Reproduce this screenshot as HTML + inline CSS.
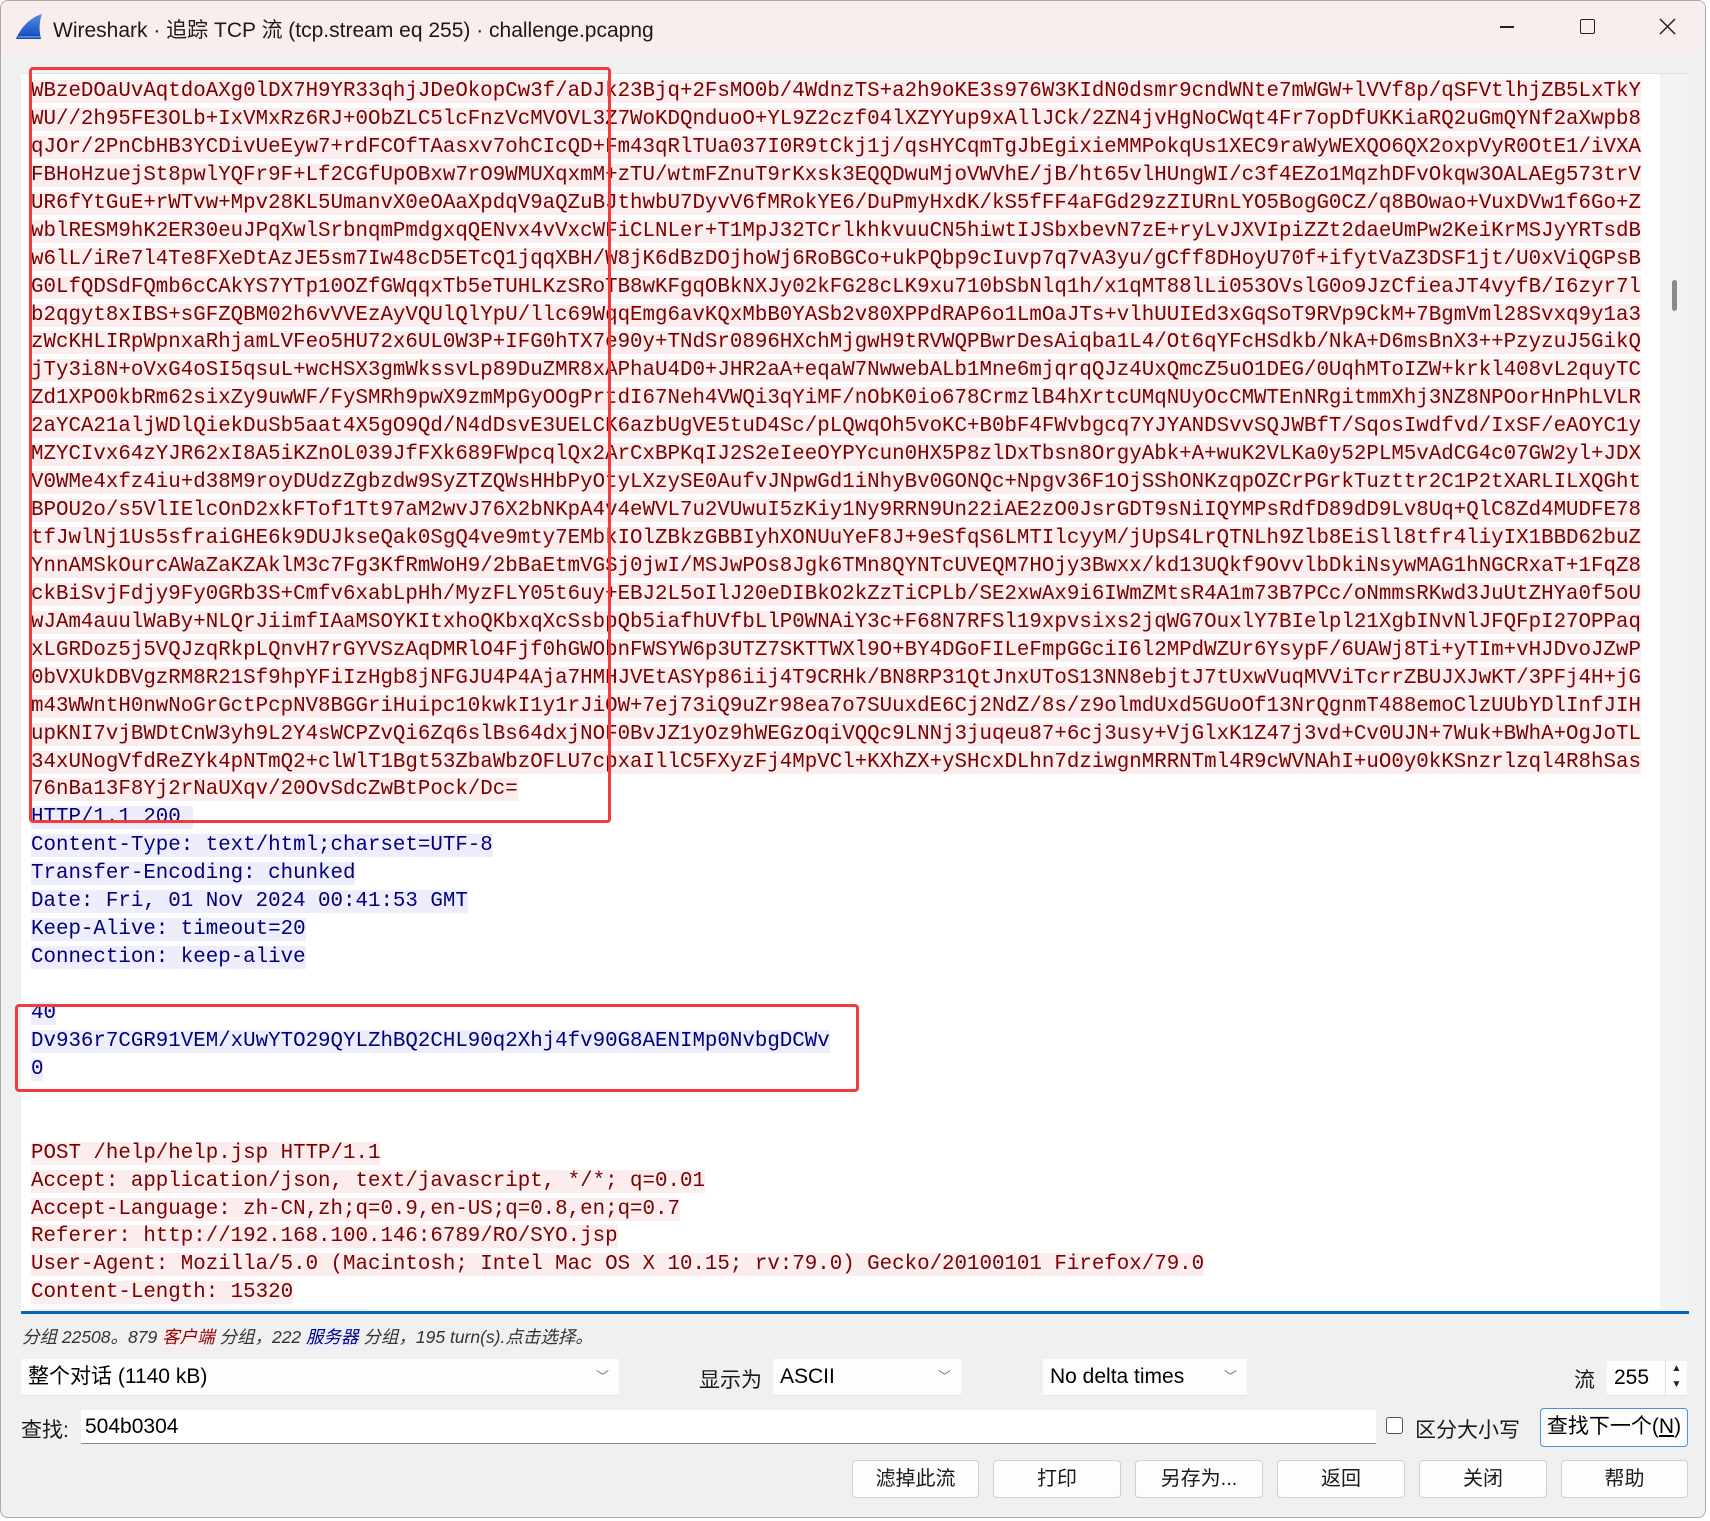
<!DOCTYPE html>
<html><head><meta charset="utf-8"><style>
*{margin:0;padding:0;box-sizing:border-box}
body{width:1710px;height:1521px;background:#fff;position:relative;overflow:hidden;font-family:"Liberation Sans","Noto Sans CJK SC",sans-serif;}
#win{position:absolute;left:0;top:0;width:1706px;height:1518px;background:#f0f0f0;border:1px solid #a9a9a9;border-radius:8px;overflow:hidden}
#title{position:absolute;left:0;top:0;right:0;height:52px;background:#f9eeee}
#title .t{position:absolute;left:52px;top:13px;font-size:21px;color:#1a1a1a;white-space:nowrap}
#ta{position:absolute;left:20px;top:72px;width:1668px;height:1240px;background:#fff;overflow:hidden;border-top:1px solid #e3e3e3}
#lines{position:absolute;left:10px;top:4px;font-family:"Liberation Mono",monospace;font-size:20.8px;line-height:27.95px}
#lines div{height:27.95px;white-space:pre}
.c span{background:#fbeded;color:#7a0000}
.s span{background:#ededfb;color:#00007f}
#sb{position:absolute;left:1639px;top:0;width:29px;height:1240px;background:#f3f3f3}
#thumb{position:absolute;left:12px;top:206px;width:5px;height:31px;background:#8a8a8a;border-radius:3px}
#blue{position:absolute;left:20px;top:1310px;width:1668px;height:3px;background:#0067c0}
.box{position:absolute;border:3.5px solid #f23b3b;border-radius:4px}
.lbl{position:absolute;font-size:20px;color:#1a1a1a;white-space:nowrap}
.cb{position:absolute;background:#fdfdfd;border-bottom:1px solid #e5e5e5;font-size:21px;color:#000;padding-left:7px;line-height:36px}
.cb i{position:absolute;right:10px;top:0;font-style:normal;font-size:13px;color:#777}
.btn{position:absolute;top:1459px;height:38px;background:#fdfdfd;border:1px solid #d0d0d0;border-radius:4px;font-size:20px;text-align:center;line-height:36px;color:#1a1a1a}
</style></head><body><div id="win">
<div id="title">
<svg style="position:absolute;left:14px;top:12px" width="28" height="28" viewBox="0 0 28 28"><defs><linearGradient id="g" x1="0" y1="0" x2="0" y2="1"><stop offset="0" stop-color="#4f8fe6"/><stop offset="1" stop-color="#1346b8"/></linearGradient></defs><path d="M1 26 C6 14 16 4 27 1 C24 9 24 18 26 26 Z" fill="url(#g)"/><path d="M3 24 L25 24" stroke="#8fb6ee" stroke-width="1"/></svg>
<div class="t">Wireshark · 追踪 TCP 流 (tcp.stream eq 255) · challenge.pcapng</div>
<div style="position:absolute;left:1499px;top:25px;width:14px;height:1.5px;background:#222"></div>
<div style="position:absolute;left:1579px;top:18px;width:15px;height:15px;border:1.5px solid #222;border-radius:2px"></div>
<svg style="position:absolute;left:1658px;top:17px" width="17" height="17"><path d="M1 1L16 16M16 1L1 16" stroke="#222" stroke-width="1.5"/></svg>
</div>
<div id="ta"><div id="lines"><div class="c"><span>WBzeDOaUvAqtdoAXg0lDX7H9YR33qhjJDeOkopCw3f/aDJk23Bjq+2FsMO0b/4WdnzTS+a2h9oKE3s976W3KIdN0dsmr9cndWNte7mWGW+lVVf8p/qSFVtlhjZB5LxTkY</span></div><div class="c"><span>WU//2h95FE3OLb+IxVMxRz6RJ+0ObZLC5lcFnzVcMVOVL3Z7WoKDQnduoO+YL9Z2czf04lXZYYup9xAllJCk/2ZN4jvHgNoCWqt4Fr7opDfUKKiaRQ2uGmQYNf2aXwpb8</span></div><div class="c"><span>qJOr/2PnCbHB3YCDivUeEyw7+rdFCOfTAasxv7ohCIcQD+Fm43qRlTUa037I0R9tCkj1j/qsHYCqmTgJbEgixieMMPokqUs1XEC9raWyWEXQO6QX2oxpVyR0OtE1/iVXA</span></div><div class="c"><span>FBHoHzuejSt8pwlYQFr9F+Lf2CGfUpOBxw7rO9WMUXqxmM+zTU/wtmFZnuT9rKxsk3EQQDwuMjoVWVhE/jB/ht65vlHUngWI/c3f4EZo1MqzhDFvOkqw3OALAEg573trV</span></div><div class="c"><span>UR6fYtGuE+rWTvw+Mpv28KL5UmanvX0eOAaXpdqV9aQZuBJthwbU7DyvV6fMRokYE6/DuPmyHxdK/kS5fFF4aFGd29zZIURnLYO5BogG0CZ/q8BOwao+VuxDVw1f6Go+Z</span></div><div class="c"><span>wblRESM9hK2ER30euJPqXwlSrbnqmPmdgxqQENvx4vVxcWFiCLNLer+T1MpJ32TCrlkhkvuuCN5hiwtIJSbxbevN7zE+ryLvJXVIpiZZt2daeUmPw2KeiKrMSJyYRTsdB</span></div><div class="c"><span>w6lL/iRe7l4Te8FXeDtAzJE5sm7Iw48cD5ETcQ1jqqXBH/W8jK6dBzDOjhoWj6RoBGCo+ukPQbp9cIuvp7q7vA3yu/gCff8DHoyU70f+ifytVaZ3DSF1jt/U0xViQGPsB</span></div><div class="c"><span>G0LfQDSdFQmb6cCAkYS7YTp10OZfGWqqxTb5eTUHLKzSRoTB8wKFgqOBkNXJy02kFG28cLK9xu710bSbNlq1h/x1qMT88lLi053OVslG0o9JzCfieaJT4vyfB/I6zyr7l</span></div><div class="c"><span>b2qgyt8xIBS+sGFZQBM02h6vVVEzAyVQUlQlYpU/llc69WqqEmg6avKQxMbB0YASb2v80XPPdRAP6o1LmOaJTs+vlhUUIEd3xGqSoT9RVp9CkM+7BgmVml28Svxq9y1a3</span></div><div class="c"><span>zWcKHLIRpWpnxaRhjamLVFeo5HU72x6UL0W3P+IFG0hTX7e90y+TNdSr0896HXchMjgwH9tRVWQPBwrDesAiqba1L4/Ot6qYFcHSdkb/NkA+D6msBnX3++PzyzuJ5GikQ</span></div><div class="c"><span>jTy3i8N+oVxG4oSI5qsuL+wcHSX3gmWkssvLp89DuZMR8xAPhaU4D0+JHR2aA+eqaW7NwwebALb1Mne6mjqrqQJz4UxQmcZ5uO1DEG/0UqhMToIZW+krkl408vL2quyTC</span></div><div class="c"><span>Zd1XPO0kbRm62sixZy9uwWF/FySMRh9pwX9zmMpGyOOgPrtdI67Neh4VWQi3qYiMF/nObK0io678CrmzlB4hXrtcUMqNUyOcCMWTEnNRgitmmXhj3NZ8NPOorHnPhLVLR</span></div><div class="c"><span>2aYCA21aljWDlQiekDuSb5aat4X5gO9Qd/N4dDsvE3UELCK6azbUgVE5tuD4Sc/pLQwqOh5voKC+B0bF4FWvbgcq7YJYANDSvvSQJWBfT/SqosIwdfvd/IxSF/eAOYC1y</span></div><div class="c"><span>MZYCIvx64zYJR62xI8A5iKZnOL039JfFXk689FWpcqlQx2ArCxBPKqIJ2S2eIeeOYPYcun0HX5P8zlDxTbsn8OrgyAbk+A+wuK2VLKa0y52PLM5vAdCG4c07GW2yl+JDX</span></div><div class="c"><span>V0WMe4xfz4iu+d38M9royDUdzZgbzdw9SyZTZQWsHHbPyOtyLXzySE0AufvJNpwGd1iNhyBv0GONQc+Npgv36F1OjSShONKzqpOZCrPGrkTuzttr2C1P2tXARLILXQGht</span></div><div class="c"><span>BPOU2o/s5VlIElcOnD2xkFTof1Tt97aM2wvJ76X2bNKpA4v4eWVL7u2VUwuI5zKiy1Ny9RRN9Un22iAE2zO0JsrGDT9sNiIQYMPsRdfD89dD9Lv8Uq+QlC8Zd4MUDFE78</span></div><div class="c"><span>tfJwlNj1Us5sfraiGHE6k9DUJkseQak0SgQ4ve9mty7EMbkIOlZBkzGBBIyhXONUuYeF8J+9eSfqS6LMTIlcyyM/jUpS4LrQTNLh9Zlb8EiSll8tfr4liyIX1BBD62buZ</span></div><div class="c"><span>YnnAMSkOurcAWaZaKZAklM3c7Fg3KfRmWoH9/2bBaEtmVGSj0jwI/MSJwPOs8Jgk6TMn8QYNTcUVEQM7HOjy3Bwxx/kd13UQkf9OvvlbDkiNsywMAG1hNGCRxaT+1FqZ8</span></div><div class="c"><span>ckBiSvjFdjy9Fy0GRb3S+Cmfv6xabLpHh/MyzFLY05t6uy+EBJ2L5oIlJ20eDIBkO2kZzTiCPLb/SE2xwAx9i6IWmZMtsR4A1m73B7PCc/oNmmsRKwd3JuUtZHYa0f5oU</span></div><div class="c"><span>wJAm4auulWaBy+NLQrJiimfIAaMSOYKItxhoQKbxqXcSsbpQb5iafhUVfbLlP0WNAiY3c+F68N7RFSl19xpvsixs2jqWG7OuxlY7BIelpl21XgbINvNlJFQFpI27OPPaq</span></div><div class="c"><span>xLGRDoz5j5VQJzqRkpLQnvH7rGYVSzAqDMRlO4Fjf0hGWObnFWSYW6p3UTZ7SKTTWXl9O+BY4DGoFILeFmpGGciI6l2MPdWZUr6YsypF/6UAWj8Ti+yTIm+vHJDvoJZwP</span></div><div class="c"><span>0bVXUkDBVgzRM8R21Sf9hpYFiIzHgb8jNFGJU4P4Aja7HMHJVEtASYp86iij4T9CRHk/BN8RP31QtJnxUToS13NN8ebjtJ7tUxwVuqMVViTcrrZBUJXJwKT/3PFj4H+jG</span></div><div class="c"><span>m43WWntH0nwNoGrGctPcpNV8BGGriHuipc10kwkI1y1rJiOW+7ej73iQ9uZr98ea7o7SUuxdE6Cj2NdZ/8s/z9olmdUxd5GUoOf13NrQgnmT488emoClzUUbYDlInfJIH</span></div><div class="c"><span>upKNI7vjBWDtCnW3yh9L2Y4sWCPZvQi6Zq6slBs64dxjNOF0BvJZ1yOz9hWEGzOqiVQQc9LNNj3juqeu87+6cj3usy+VjGlxK1Z47j3vd+Cv0UJN+7Wuk+BWhA+OgJoTL</span></div><div class="c"><span>34xUNogVfdReZYk4pNTmQ2+clWlT1Bgt53ZbaWbzOFLU7cpxaIllC5FXyzFj4MpVCl+KXhZX+ySHcxDLhn7dziwgnMRRNTml4R9cWVNAhI+uO0y0kKSnzrlzql4R8hSas</span></div><div class="c"><span>76nBa13F8Yj2rNaUXqv/20OvSdcZwBtPock/Dc=</span></div><div class="s"><span>HTTP/1.1 200 </span></div><div class="s"><span>Content-Type: text/html;charset=UTF-8</span></div><div class="s"><span>Transfer-Encoding: chunked</span></div><div class="s"><span>Date: Fri, 01 Nov 2024 00:41:53 GMT</span></div><div class="s"><span>Keep-Alive: timeout=20</span></div><div class="s"><span>Connection: keep-alive</span></div><div></div><div class="s"><span>40</span></div><div class="s"><span>Dv936r7CGR91VEM/xUwYTO29QYLZhBQ2CHL90q2Xhj4fv90G8AENIMp0NvbgDCWv</span></div><div class="s"><span>0</span></div><div></div><div></div><div class="c"><span>POST /help/help.jsp HTTP/1.1</span></div><div class="c"><span>Accept: application/json, text/javascript, */*; q=0.01</span></div><div class="c"><span>Accept-Language: zh-CN,zh;q=0.9,en-US;q=0.8,en;q=0.7</span></div><div class="c"><span>Referer: http://192.168.100.146:6789/RO/SYO.jsp</span></div><div class="c"><span>User-Agent: Mozilla/5.0 (Macintosh; Intel Mac OS X 10.15; rv:79.0) Gecko/20100101 Firefox/79.0</span></div><div class="c"><span>Content-Length: 15320</span></div><div class="c"><span>                           </span></div></div>
<div id="sb"><div id="thumb"></div></div>
</div>
<div id="blue"></div>
<div class="box" style="left:28px;top:66px;width:582px;height:756px"></div>
<div class="box" style="left:14px;top:1003px;width:844px;height:88px"></div>

<div class="lbl" style="left:21px;top:1323px;font-size:17.5px;font-style:italic;color:#333">分组 22508。879 <span style="color:#8b0000;background:#fbeded">客户端</span> 分组，222 <span style="color:#00007f;background:#ededfb">服务器</span> 分组，195 turn(s).点击选择。</div>

<div class="cb" style="left:20px;top:1358px;width:598px;height:37px">整个对话 (1140 kB)<i>﹀</i></div>
<div class="lbl" style="left:698px;top:1363px;font-size:21px">显示为</div>
<div class="cb" style="left:772px;top:1358px;width:188px;height:37px">ASCII<i>﹀</i></div>
<div class="cb" style="left:1042px;top:1358px;width:204px;height:37px">No delta times<i>﹀</i></div>
<div class="lbl" style="left:1573px;top:1363px;font-size:21px">流</div>
<div class="cb" style="left:1606px;top:1360px;width:80px;height:35px;line-height:34px">255
<div style="position:absolute;right:0;top:0;width:22px;height:34px;border-left:1px solid #ddd;font-size:10px;line-height:16px;text-align:center;color:#222">▲<br>▼</div></div>

<div class="lbl" style="left:20px;top:1413px;font-size:21px">查找:</div>
<div style="position:absolute;left:80px;top:1409px;width:1295px;height:34px;background:#fff;border-bottom:1px solid #888;font-size:21px;line-height:34px;padding-left:4px">504b0304</div>
<div style="position:absolute;left:1385px;top:1416px;width:17px;height:17px;border:1px solid #555;border-radius:3px;background:#fff"></div>
<div class="lbl" style="left:1414px;top:1413px;font-size:21px">区分大小写</div>
<div style="position:absolute;left:1539px;top:1407px;width:148px;height:39px;background:#fdfdfd;border:1.5px solid #4a90e2;border-radius:4px;font-size:21px;line-height:36px;text-align:center">查找下一个(<u>N</u>)</div>

<div class="btn" style="left:851px;width:127px">滤掉此流</div>
<div class="btn" style="left:992px;width:128px">打印</div>
<div class="btn" style="left:1134px;width:128px">另存为...</div>
<div class="btn" style="left:1276px;width:128px">返回</div>
<div class="btn" style="left:1418px;width:128px">关闭</div>
<div class="btn" style="left:1560px;width:127px">帮助</div>
</div></body></html>
